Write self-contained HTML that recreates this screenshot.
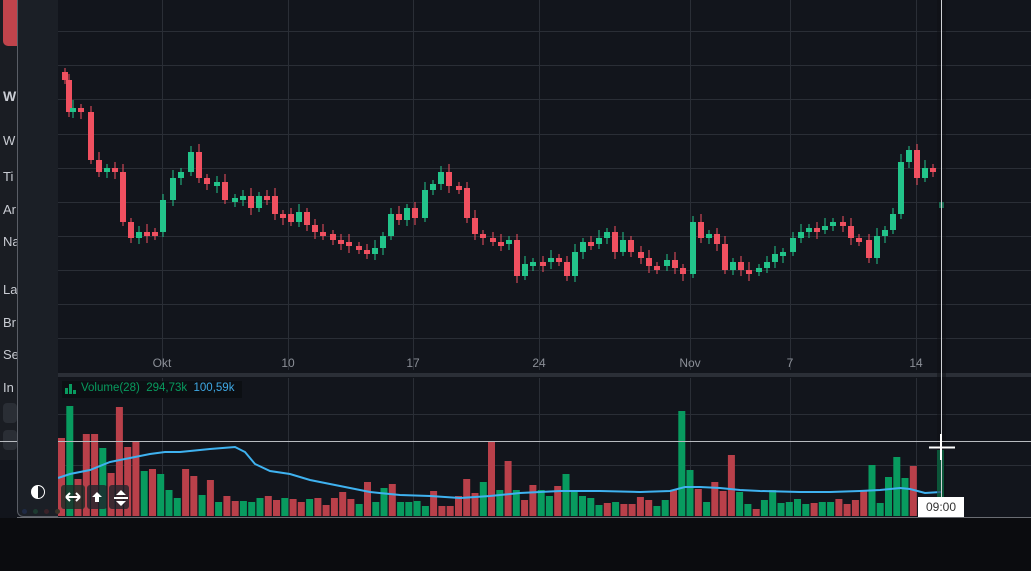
<!DOCTYPE html>
<html><head><meta charset="utf-8"><style>
html,body{margin:0;padding:0;width:1031px;height:571px;overflow:hidden;background:#0b0c0f;font-family:"Liberation Sans",sans-serif}
#c{position:absolute;left:0;top:0}
.lt{position:absolute;left:3px;color:#c9ccd3;font-size:13px}
</style></head><body>
<div style="position:absolute;left:0;top:0;width:1031px;height:518px;background:#12151c"></div>
<div style="position:absolute;left:0;top:0;width:17px;height:460px;background:#1a1d23"></div>
<div style="position:absolute;left:3px;top:0;width:14px;height:46px;background:#c0444c;border-radius:0 0 0 5px"></div>
<div class="lt" style="top:88px;font-weight:bold;font-size:14px">W</div>
<div class="lt" style="top:133px">W</div>
<div class="lt" style="top:169px">Ti</div>
<div class="lt" style="top:202px">Ar</div>
<div class="lt" style="top:234px">Na</div>
<div class="lt" style="top:282px">La</div>
<div class="lt" style="top:315px">Br</div>
<div class="lt" style="top:347px">Se</div>
<div class="lt" style="top:380px">In</div>
<div style="position:absolute;left:3px;top:403px;width:14px;height:20px;background:#2a2e35;border-radius:4px"></div>
<div style="position:absolute;left:3px;top:430px;width:14px;height:20px;background:#2a2e35;border-radius:4px"></div>
<svg id="c" width="1031" height="571" xmlns="http://www.w3.org/2000/svg"></svg>
<div style="position:absolute;left:17px;top:0;width:40px;height:516px;background:#1b1f26;border-left:1px solid #5a5e66;border-bottom:1px solid #5a5e66;border-radius:0 0 0 6px"></div>
<div style="position:absolute;left:17px;top:517px;width:1014px;height:1px;background:#6a6d73"></div>
<div style="position:absolute;left:31px;top:485px;width:12px;height:12px;border-radius:50%;border:1.5px solid #fff;background:linear-gradient(90deg,#fff 50%,transparent 50%)"></div>
<svg style="position:absolute;left:61px;top:485px" width="70" height="26">
<rect x="0" y="0" width="24" height="24" rx="3" fill="#1c2a26" opacity=".8"/>
<rect x="26" y="0" width="20" height="24" rx="3" fill="#1e232a" opacity=".8"/>
<rect x="48" y="0" width="20" height="24" rx="3" fill="#1e232a" opacity=".8"/>
<path d="M5 12H19M5 12L9 8M5 12L9 16M19 12L15 8M19 12L15 16" stroke="#fff" stroke-width="2" fill="none"/>
<path d="M36 7L41 12H38V17H34V12H31Z" fill="#fff"/>
<path d="M60 5L65 10H55Z M53 12H67V14H53Z M55 16H65L60 21Z" fill="#fff"/>
</svg>
<div style="position:absolute;left:22px;top:509px;width:5px;height:5px;border-radius:50%;background:#1f2a44"></div>
<div style="position:absolute;left:33px;top:509px;width:5px;height:5px;border-radius:50%;background:#1d3a30"></div>
<div style="position:absolute;left:44px;top:509px;width:5px;height:5px;border-radius:50%;background:#3a2228"></div>
<div style="position:absolute;left:55px;top:509px;width:5px;height:5px;border-radius:50%;background:#3a3428"></div>
<div style="position:absolute;left:62px;top:381px;width:180px;height:17px;background:#0c0f13"></div>
<svg style="position:absolute;left:65px;top:384px" width="12" height="10"><rect x="0" y="4" width="3" height="6" fill="#089b5f"/><rect x="4" y="0" width="3" height="10" fill="#089b5f"/><rect x="8" y="6" width="3" height="4" fill="#089b5f"/></svg>
<div style="position:absolute;left:81px;top:382px;font-size:11.5px;color:#089b5f;white-space:nowrap">Volume(28)&nbsp; 294,73k&nbsp; <span style="color:#3fa8e4">100,59k</span></div>
<div style="position:absolute;left:918px;top:497px;width:46px;height:20px;background:#fff;color:#333;font-size:12px;text-align:center;line-height:21px">09:00</div>
<script>
const s=document.getElementById('c');let h='';
function L(x1,y1,x2,y2,c,w){h+=`<line x1="${x1}" y1="${y1}" x2="${x2}" y2="${y2}" stroke="${c}" stroke-width="${w||1}"/>`}
[31,65,99,134,168,202,236,270,304,338].forEach(y=>L(58,y+.5,1031,y+.5,'#2a2e36'));
[414,465].forEach(y=>L(58,y+.5,1031,y+.5,'#2a2e36'));
[162,288,413,539,690,790,916].forEach(x=>{L(x+.5,0,x+.5,370,'#2a2e36');L(x+.5,378,x+.5,516,'#2a2e36')});
h+=`<rect x="58" y="373" width="973" height="4" fill="#2b2f37"/>`;
[['Okt',162],['10',288],['17',413],['24',539],['Nov',690],['7',790],['14',916]].forEach(a=>h+=`<text x="${a[1]}" y="367" fill="#8b8f97" font-size="12" text-anchor="middle" font-family="Liberation Sans">${a[0]}</text>`);
const A=[[62,80],[66,112],[70,108],[78,112],[88,160],[96,172],[104,168],[112,172],[120,222],[128,238],[136,232],[144,232],[152,232],[160,200],[170,178],[178,172],[188,152],[196,178],[204,184],[214,182],[222,200],[232,198],[240,196],[248,208],[256,196],[264,196],[272,214],[280,214],[288,222],[296,212],[304,225],[312,232],[320,234],[330,240],[338,242],[346,246],[356,250],[364,254],[372,248],[380,236],[388,214],[396,220],[404,208],[412,218],[422,190],[430,184],[438,172],[446,186],[456,188],[464,218],[472,234],[480,238],[490,242],[498,242],[506,240],[514,276],[522,264],[530,262],[540,262],[548,258],[556,262],[564,276],[572,252],[580,242],[588,244],[596,238],[604,232],[612,252],[620,240],[628,252],[638,258],[646,266],[654,266],[664,260],[672,268],[680,274],[690,222],[698,238],[706,234],[714,244],[722,270],[730,262],[738,270],[746,270],[756,268],[764,262],[772,254],[780,252],[790,238],[798,232],[806,228],[814,228],[822,226],[830,222],[840,226],[848,238],[856,240],[866,258],[874,236],[882,230],[890,214],[898,162],[906,150],[914,178],[922,168],[930,170]];
const G='#22c48a',R='#f05060',GV='#089b5f',RV='#b9404a';
let pv=80;
A.forEach((a,i)=>{const x=a[0],c=a[1],o=i?pv:72;const up=c<o;const col=up?G:R;
const t=Math.min(o,c),b=Math.max(o,c,t+2)+(Math.abs(o-c)<3?2:0);
L(x+3,t-4-(i%3)*2,x+3,b+4+(i%4),col);h+=`<rect x="${x}" y="${t}" width="6" height="${Math.max(b-t,3)}" fill="${col}"/>`;pv=c;});
h+=`<rect x="939" y="202" width="5" height="6" fill="${G}"/>`;
const V='78R 110G 37R 82R 82R 68G 43R 109R 69R 75R 45G 47R 42G 26G 18G 47R 40R 21G 36R 14G 20R 15R 15G 14G 18G 20R 16R 18G 17R 14R 17G 18R 11R 18R 24R 17R 12G 34R 14G 28G 32R 14G 14G 15G 10G 25R 10R 10R 20R 37R 23R 34G 74R 26G 55R 26G 16R 31R 26G 20G 30R 42G 26G 20G 18G 11G 13R 14G 12R 12R 19R 16R 10G 16G 26R 105G 46G 27R 14G 34R 25R 61R 24G 12G 7R 16G 26G 13G 14G 17G 12G 13R 14G 14G 17R 12R 16R 25R 51G 13G 39G 59G 38G 50R 10G'.split(' ');
V.forEach((v,i)=>{const x=58+i*8.27,hh=parseInt(v);h+=`<rect x="${x.toFixed(1)}" y="${516-hh}" width="7" height="${hh}" fill="${v.endsWith('G')?GV:RV}"/>`});
h+=`<rect x="937" y="450" width="7" height="66" fill="${GV}"/>`;
h+=`<polyline fill="none" stroke="#3fb2f0" stroke-width="2" points="58,478 70,474 90,470 110,462 130,458 150,454 165,452 180,452 210,449 235,447 245,452 255,464 270,471 290,474 310,480 330,484 350,488 370,492 400,495 430,496 460,498 490,496 520,493 560,491 600,491 640,492 670,491 685,487 700,487 720,488 740,490 760,491 800,492 830,492 860,491 880,490 900,488 910,489 925,493 941,492"/>`;
h+=`<rect x="937" y="0" width="9" height="497" fill="#0d0f13" opacity=".5"/>`;L(941.5,0,941.5,497,'#d0d2d6');
L(0,441.5,1031,441.5,'#b8bbc0');
L(929,447.5,955,447.5,'#fff',2);L(941,434,941,460,'#fff',2);
s.innerHTML=h;
</script>
</body></html>
